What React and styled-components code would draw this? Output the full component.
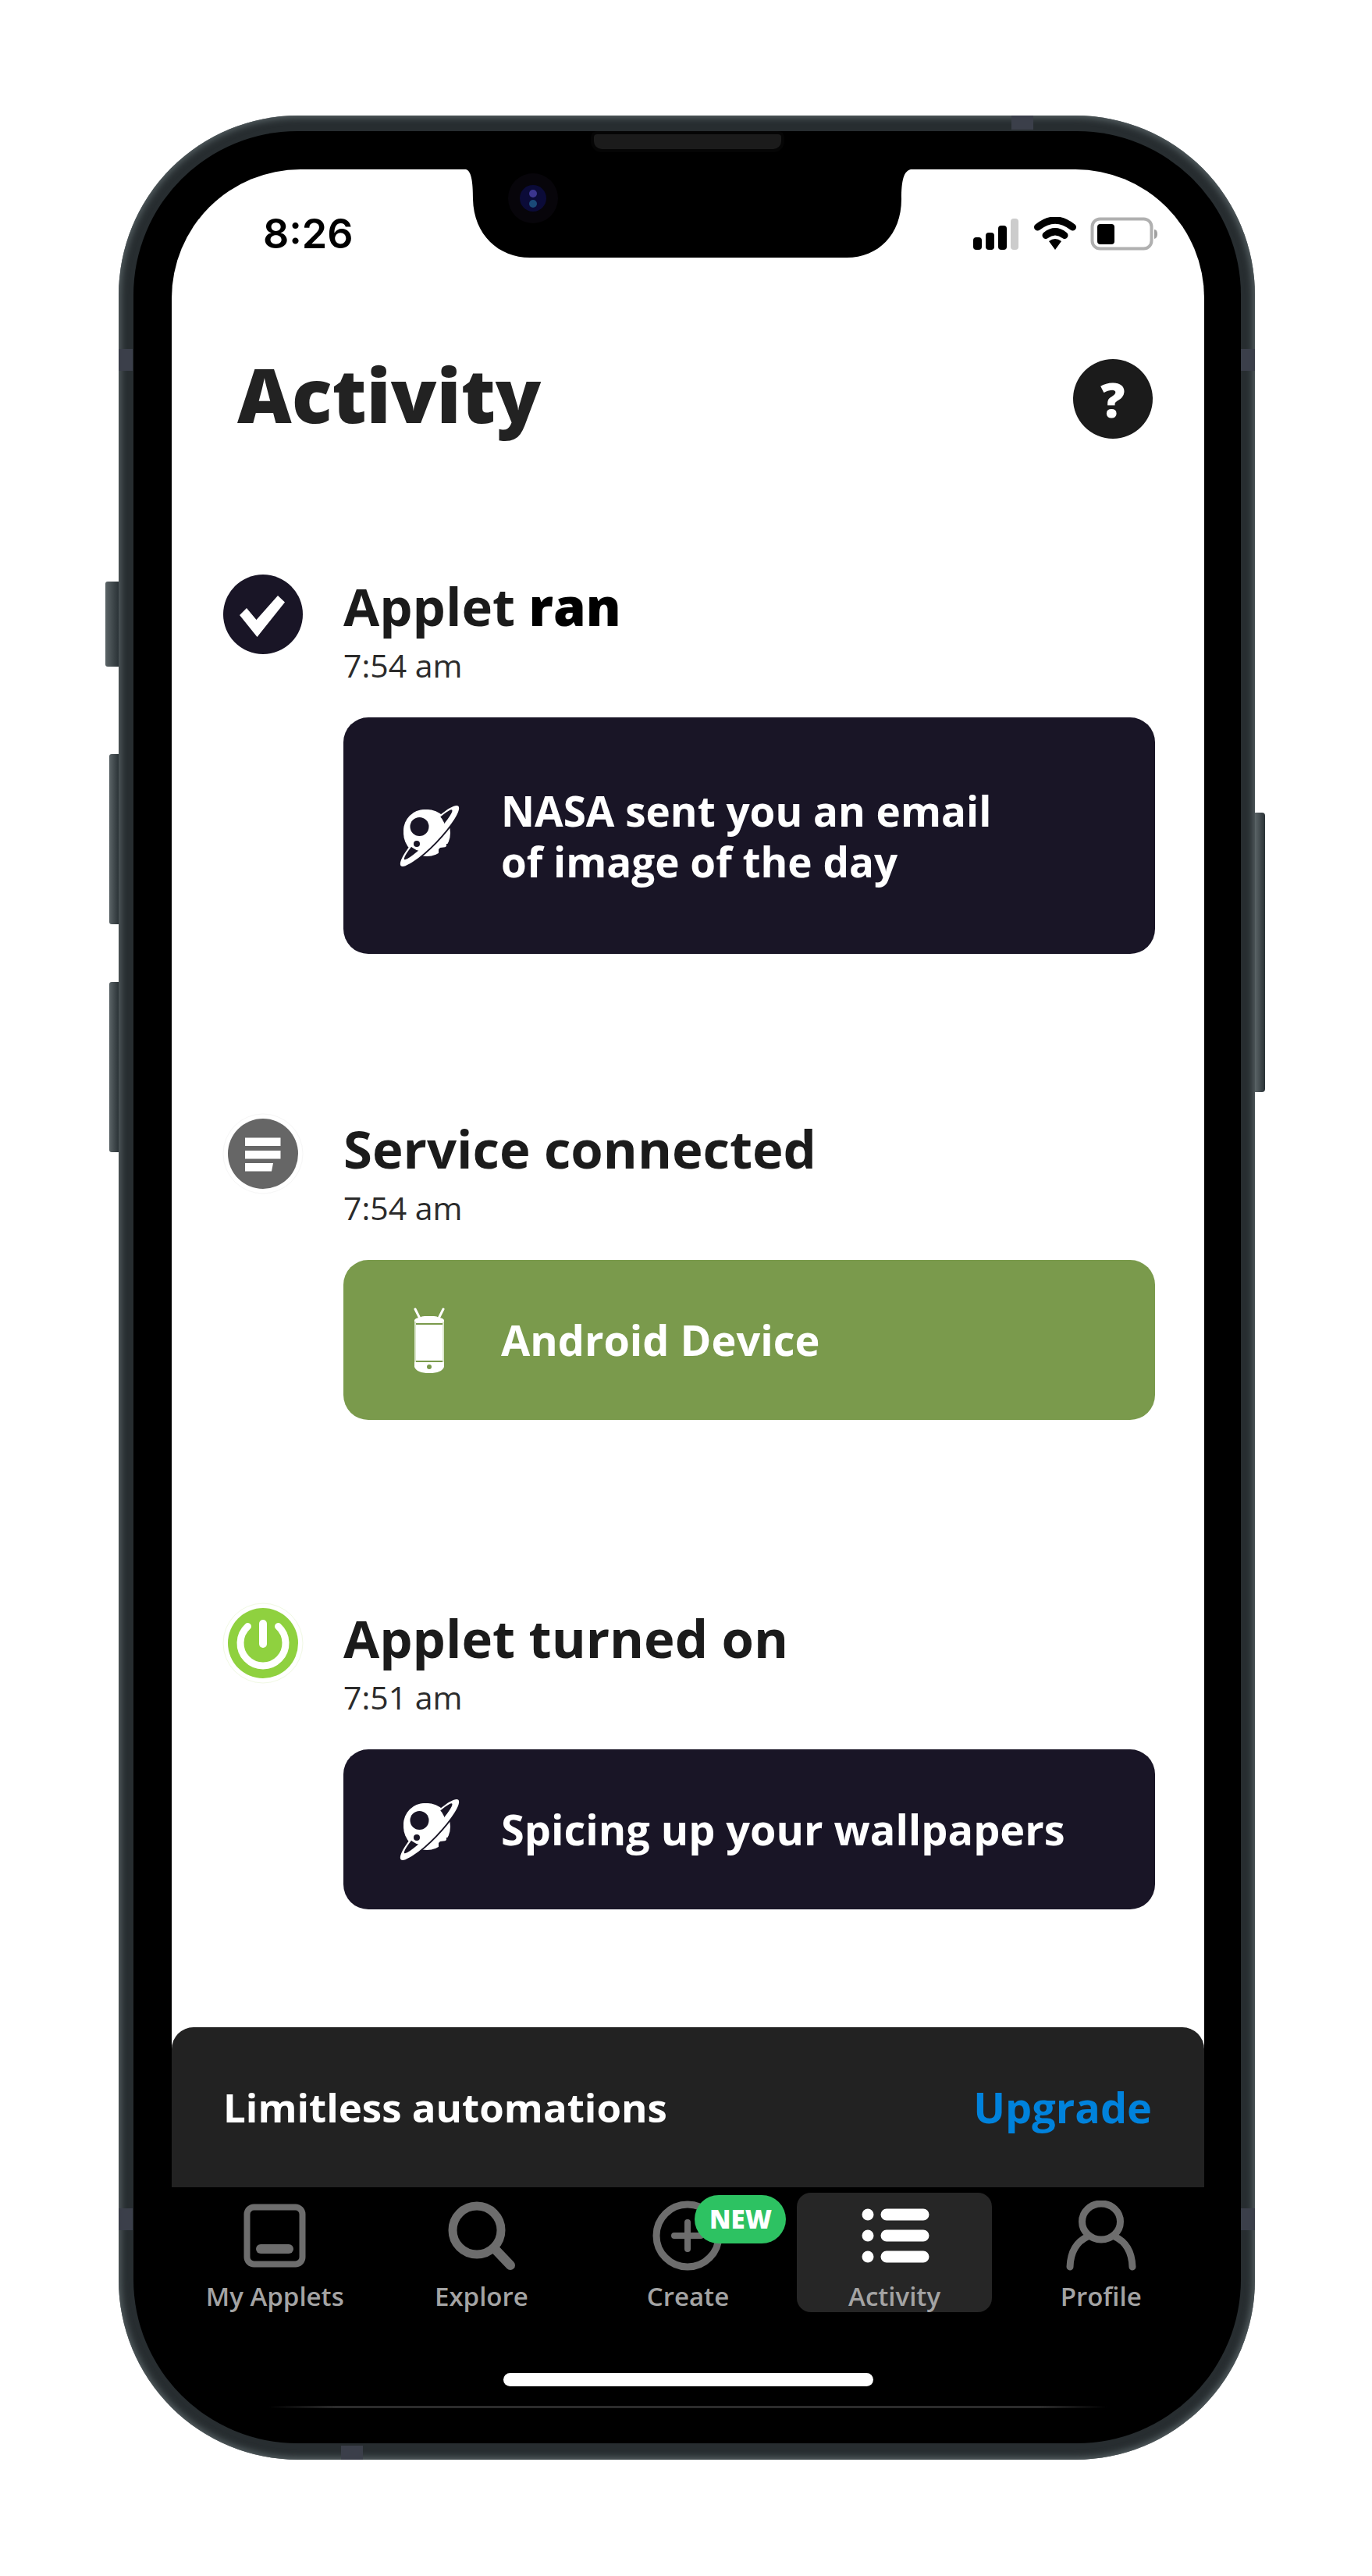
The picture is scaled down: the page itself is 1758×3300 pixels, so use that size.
import React from 'react';
import styled, { createGlobalStyle, css } from 'styled-components';

const NIGHT = '#191526';

const GlobalStyle = createGlobalStyle`
  *, *::before, *::after { box-sizing: border-box; }
  body {
    margin: 0;
    background: #fff;
    font-family: "Open Sans", "Noto Sans", sans-serif;
    color: #1b1b1b;
  }
  h1, h2, p, ul, ol { margin: 0; padding: 0; list-style: none; }
  button { border: 0; padding: 0; background: none; font: inherit; color: inherit; cursor: pointer; }
  svg { display: block; }
`;

/* ---------- device ---------- */

const Page = styled.div`
  padding: 148px 150px 149px 152px;
`;

const Phone = styled.div`
  position: relative;
  padding: 20px 18px 21px 19px;
  border-radius: 230px;
  background: #272d30;
  box-shadow: inset 0 0 9px 3px #566063;
`;

const SideKey = styled.span`
  position: absolute;
  top: ${(p) => p.$top}px;
  height: ${(p) => p.$height}px;
  width: ${(p) => p.$depth}px;
  background: linear-gradient(to right, #5b6467, #2a3236);
  ${(p) =>
    p.$side === 'left'
      ? css`right: 100%; border-radius: 3px 0 0 3px;`
      : css`left: 100%; border-radius: 0 4px 4px 0;`}
`;

const AntennaBand = styled.span`
  position: absolute;
  background: #3b3f4a;
  ${(p) => (p.$edge === 'left' || p.$edge === 'right' ? css`width: 18px; height: 28px;` : css`width: 28px; height: 18px;`)}
  ${(p) => p.$edge}: 0;
  ${(p) => p.$from}: ${(p) => p.$at}px;
`;

const Bezel = styled.div`
  position: relative;
  padding: 49px 47px 45px 49px;
  border-radius: 210px;
  background: #000;
`;

const Speaker = styled.span`
  position: absolute;
  top: 4px;
  left: 50%;
  width: 240px;
  height: 19px;
  margin-left: -120px;
  border-radius: 4px 4px 10px 10px;
  background: #1b1b1b;
  box-shadow: 0 0 0 4px #050505;
`;

const Screen = styled.main`
  position: relative;
  overflow: hidden;
  border-radius: 165px 165px 0 0;
  background: #fff;
`;

const NotchShape = styled.svg`
  position: absolute;
  top: 0;
  left: 50%;
  margin-left: -285px;
`;

/* ---------- status bar and header ---------- */

const StatusBar = styled.div`
  display: flex;
  align-items: center;
  justify-content: space-between;
  height: 60px;
  margin: 53px 60px 0 117px;
`;

const Clock = styled.time`
  font-family: Inter, "Open Sans", sans-serif;
  font-size: 52px;
  line-height: 60px;
  font-weight: 600;
  color: #000;
`;

const Header = styled.header`
  display: flex;
  align-items: flex-start;
  justify-content: space-between;
  margin-top: 130px;
  padding: 0 66px 0 84px;
`;

const Title = styled.h1`
  font-size: 96px;
  line-height: 90px;
  font-weight: 800;
  color: #222;
`;

const HelpButton = styled.button`
  width: 102px;
  height: 102px;
  border-radius: 50%;
  background: #1b1b1b;
  color: #fff;
  font-size: 62px;
  line-height: 102px;
  font-weight: 800;
  text-align: center;
`;

/* ---------- activity feed ---------- */

const Feed = styled.ol`
  padding: 174px 63px 151px 66px;
`;

const Entry = styled.li`
  display: flex;
  align-items: flex-start;
  gap: 52px;
  margin-top: ${(p) => p.$space}px;
`;

const Marker = styled.div`
  flex: none;
  display: flex;
  justify-content: center;
  width: 102px;
`;

const EntryBody = styled.div`
  flex: 1;
  min-width: 0;
`;

const EntryTitle = styled.h2`
  font-size: 67px;
  line-height: 80px;
  font-weight: 700;
`;

const Strong = styled.span`
  font-weight: 800;
  color: #000;
`;

const EntryTime = styled.time`
  display: block;
  margin-top: 6px;
  font-size: 41px;
  line-height: 60px;
  color: #2b2b2b;
`;

const Card = styled.div`
  display: flex;
  align-items: center;
  gap: 52px;
  min-height: ${(p) => (p.$tall ? 303 : 205)}px;
  margin-top: 37px;
  padding: 32px 70px;
  border-radius: 32px;
  background: ${(p) => p.$color};
  color: #fff;
`;

const CardIcon = styled.div`
  flex: none;
  display: flex;
  justify-content: center;
  width: 80px;
`;

const CardText = styled.p`
  font-size: ${(p) => (p.$tall ? 53 : 54)}px;
  line-height: 65px;
  font-weight: 700;
`;

/* ---------- banner and tabs ---------- */

const Banner = styled.aside`
  display: flex;
  align-items: center;
  justify-content: space-between;
  height: 205px;
  padding: 0 67px 0 66px;
  border-radius: 28px 28px 0 0;
  background: #222;
`;

const BannerText = styled.p`
  font-size: 51px;
  line-height: 65px;
  font-weight: 700;
  color: #fff;
`;

const UpgradeLink = styled.a`
  font-size: 54px;
  line-height: 65px;
  font-weight: 700;
  color: #0082dc;
  text-decoration: none;
`;

const TabBar = styled.nav`
  display: flex;
`;

const Tab = styled.button`
  flex: 1;
  display: flex;
  flex-direction: column;
  align-items: center;
  gap: 13px;
  margin: 7px;
  padding-top: 10px;
  border-radius: 18px;
  background: ${(p) => (p.$active ? '#262626' : 'transparent')};
  color: ${(p) => (p.$active ? '#fff' : '#6d6d6d')};
`;

const TabIcon = styled.span`
  position: relative;
  width: 90px;
  height: 90px;
`;

const TabLabel = styled.span`
  font-size: 33px;
  line-height: 40px;
  font-weight: 600;
  white-space: nowrap;
  color: #a3a3a3;
`;

const Badge = styled.span`
  position: absolute;
  top: -7px;
  left: 54px;
  width: 117px;
  border-radius: 31px;
  background: #2dc262;
  color: #fff;
  font-size: 33px;
  line-height: 62px;
  font-weight: 800;
  text-align: center;
`;

const HomeIndicator = styled.div`
  width: 474px;
  height: 17px;
  margin: 71px auto 0;
  border-radius: 9px;
  background: #fff;
`;

const ChinLine = styled.div`
  height: 3px;
  margin: 25px 125px 0;
  background: linear-gradient(to right, transparent, #2c2c2c 8%, #2c2c2c 92%, transparent);
`;

/* ---------- drawings ---------- */

const Notch = () => (
  <NotchShape width="570" height="114" viewBox="0 0 570 114" aria-hidden="true">
    <path d="M0 0C7 2 9 16 9 38C10 84 42 113 82 113H488C528 113 558 84 558 38C558 14 561 2 570 0Z" fill="#000" />
    <circle cx="86" cy="37" r="32" fill="#07050a" />
    <circle cx="86" cy="37" r="17" fill="#0b0b38" />
    <circle cx="86" cy="31" r="5" fill="#3b358f" />
    <circle cx="86" cy="44" r="5" fill="#1a4a78" />
  </NotchShape>
);

const StatusIcons = () => (
  <svg width="236" height="44" viewBox="0 0 236 44" role="img" aria-label="Signal, Wi-Fi and battery">
    <rect x="0" y="26" width="11" height="16" rx="4" />
    <rect x="16" y="20" width="11" height="22" rx="4" />
    <rect x="32" y="11" width="11" height="31" rx="4" />
    <rect x="48" y="2" width="10" height="40" rx="4" fill="#ccc" />
    <g fill="none" stroke="#000" strokeWidth="9" strokeLinecap="round">
      <path d="M82.500 13Q105 -5 127.500 13" />
      <path d="M93 23.500Q105 14 117 23.500" />
    </g>
    <path d="M97 31Q105 25 113 31L105 42Z" />
    <rect x="152.500" y="2.500" width="76" height="38" rx="10" fill="none" stroke="#b0b0b0" strokeWidth="4" />
    <rect x="159" y="9" width="22" height="26" rx="4" />
    <path d="M232 16Q236 16 236 22Q236 27 232 28Z" fill="#a0a0a0" />
  </svg>
);

const CheckMarker = () => (
  <svg width="102" height="102" viewBox="0 0 102 102" aria-hidden="true">
    <circle cx="51" cy="51" r="51" fill={NIGHT} />
    <path d="M21 52L30 43L42.500 58L70 27L79 35.500L43.500 80Z" fill="#fff" />
  </svg>
);

const NoteMarker = () => (
  <svg width="94" height="94" viewBox="0 0 94 94" overflow="visible" aria-hidden="true">
    <circle cx="47" cy="47" r="51" fill="none" stroke="#f6f6f6" strokeWidth="1" />
    <circle cx="47" cy="47" r="45" fill="#666" />
    <path d="M24 26.500H69.500V37H24ZM24 43H69.500V53.500H24ZM24 59H60L58 69.500H24Z" fill="#fff" />
  </svg>
);

const PowerMarker = () => (
  <svg width="94" height="94" viewBox="0 0 94 94" overflow="visible" aria-hidden="true">
    <circle cx="47" cy="47" r="51" fill="none" stroke="#f1f9e4" strokeWidth="1" />
    <circle cx="47" cy="47" r="45" fill="#8fd13f" />
    <g fill="none" stroke="#fff" strokeWidth="9" strokeLinecap="round">
      <path d="M27.500 25.500A29 29 0 1 0 66.500 25.500" />
      <path d="M47 22V48" strokeWidth="10" />
    </g>
  </svg>
);

const PlanetIcon = () => (
  <svg width="80" height="80" viewBox="0 0 80 80" aria-hidden="true">
    <defs>
      <clipPath id="upper"><path d="M0 0H88L0 88Z" /></clipPath>
    </defs>
    <circle cx="37" cy="36" r="30" fill="#fff" />
    <path d="M52 72V57L54 55L62 54V50H72V72Z" fill={NIGHT} />
    <g transform="rotate(-46 40.500 40)">
      <ellipse cx="40.500" cy="41.500" rx="53" ry="11.500" fill={NIGHT} />
      <ellipse cx="40.500" cy="40" rx="53" ry="11" fill="#fff" />
      <ellipse cx="40.500" cy="37.500" rx="44" ry="6" fill={NIGHT} />
    </g>
    <circle cx="34" cy="33" r="27" fill="#fff" clipPath="url(#upper)" />
    <circle cx="27.500" cy="28" r="12" fill={NIGHT} />
    <circle cx="24" cy="50" r="4" fill={NIGHT} />
  </svg>
);

const AndroidIcon = () => (
  <svg width="40" height="84" viewBox="0 0 40 84" aria-hidden="true">
    <path d="M2 2L8 14M38 2L32 14" stroke="#fff" strokeWidth="3" strokeLinecap="round" />
    <path d="M1 20V16Q3 13 8 13Q10 11 14 11H26Q30 11 32 13Q37 13 39 16V20Z" fill="#fff" />
    <rect x="3" y="22" width="34" height="46" fill="#fff" />
    <path d="M2 18V70M38 18V70" stroke="#dbe6cd" strokeWidth="2" />
    <path d="M1 70H39V76Q36 84 20 84Q4 84 1 76Z" fill="#fff" />
    <circle cx="20" cy="76" r="3" fill="#7a9a4c" />
  </svg>
);

const Glyph = ({ children }) => (
  <svg width="90" height="90" viewBox="0 0 90 90" fill="none" stroke="currentColor" strokeWidth="9" strokeLinecap="round" aria-hidden="true">
    {children}
  </svg>
);

const glyphs = {
  applets: (
    <Glyph>
      <rect x="9.500" y="8.500" width="71" height="73" rx="9" strokeWidth="8" />
      <path d="M27 62H63" strokeWidth="12" />
    </Glyph>
  ),
  explore: (
    <Glyph>
      <circle cx="39" cy="38" r="31" strokeWidth="11" />
      <path d="M62 62L82 83" strokeWidth="12" />
    </Glyph>
  ),
  create: (
    <Glyph>
      <circle cx="45" cy="45" r="40" />
      <path d="M45 28V62M28 45H62" strokeWidth="8" />
    </Glyph>
  ),
  activity: (
    <Glyph>
      <g fill="currentColor" stroke="none">
        <circle cx="11" cy="18" r="7.500" />
        <circle cx="11" cy="45" r="7.500" />
        <circle cx="11" cy="72" r="7.500" />
      </g>
      <path d="M35 18H82M35 45H82M35 72H82" strokeWidth="15" />
    </Glyph>
  ),
  profile: (
    <Glyph>
      <ellipse cx="45" cy="27" rx="24.500" ry="23" />
      <path d="M5 85Q6 56 28 46M85 85Q84 56 62 46" />
    </Glyph>
  ),
};

/* ---------- content ---------- */

const entries = [
  {
    marker: <CheckMarker />,
    title: <>Applet <Strong>ran</Strong></>,
    time: '7:54 am',
    icon: <PlanetIcon />,
    text: <>NASA sent you an email<br />of image of the day</>,
    color: NIGHT,
    tall: true,
    space: 0,
  },
  {
    marker: <NoteMarker />,
    title: 'Service connected',
    time: '7:54 am',
    icon: <AndroidIcon />,
    text: 'Android Device',
    color: '#7a9a4c',
    space: 209,
  },
  {
    marker: <PowerMarker />,
    title: 'Applet turned on',
    time: '7:51 am',
    icon: <PlanetIcon />,
    text: 'Spicing up your wallpapers',
    color: NIGHT,
    space: 239,
  },
];

const tabs = [
  { id: 'applets', label: 'My Applets' },
  { id: 'explore', label: 'Explore' },
  { id: 'create', label: 'Create', badge: 'NEW' },
  { id: 'activity', label: 'Activity', active: true },
  { id: 'profile', label: 'Profile' },
];

export default function App() {
  return (
    <>
      <GlobalStyle />
      <Page>
        <Phone>
          <SideKey $side="left" $top={597} $height={109} $depth={17} />
          <SideKey $side="left" $top={818} $height={218} $depth={12} />
          <SideKey $side="left" $top={1110} $height={218} $depth={12} />
          <SideKey $side="right" $top={893} $height={358} $depth={13} />
          <AntennaBand $edge="left" $from="top" $at={299} />
          <AntennaBand $edge="right" $from="top" $at={299} />
          <AntennaBand $edge="left" $from="bottom" $at={294} />
          <AntennaBand $edge="right" $from="bottom" $at={294} />
          <AntennaBand $edge="top" $from="right" $at={284} />
          <AntennaBand $edge="bottom" $from="left" $at={285} />
          <Bezel>
            <Speaker />
            <Screen>
              <Notch />
              <StatusBar>
                <Clock>8:26</Clock>
                <StatusIcons />
              </StatusBar>
              <Header>
                <Title>Activity</Title>
                <HelpButton type="button" aria-label="Help">?</HelpButton>
              </Header>
              <Feed>
                {entries.map((e, i) => (
                  <Entry key={i} $space={e.space}>
                    <Marker>{e.marker}</Marker>
                    <EntryBody>
                      <EntryTitle>{e.title}</EntryTitle>
                      <EntryTime>{e.time}</EntryTime>
                      <Card $color={e.color} $tall={e.tall}>
                        <CardIcon>{e.icon}</CardIcon>
                        <CardText $tall={e.tall}>{e.text}</CardText>
                      </Card>
                    </EntryBody>
                  </Entry>
                ))}
              </Feed>
              <Banner>
                <BannerText>Limitless automations</BannerText>
                <UpgradeLink href="#upgrade">Upgrade</UpgradeLink>
              </Banner>
            </Screen>
            <TabBar aria-label="Main">
              {tabs.map((t) => (
                <Tab key={t.id} type="button" $active={t.active} aria-current={t.active ? 'page' : undefined}>
                  <TabIcon>
                    {glyphs[t.id]}
                    {t.badge && <Badge>{t.badge}</Badge>}
                  </TabIcon>
                  <TabLabel>{t.label}</TabLabel>
                </Tab>
              ))}
            </TabBar>
            <HomeIndicator />
            <ChinLine />
          </Bezel>
        </Phone>
      </Page>
    </>
  );
}
